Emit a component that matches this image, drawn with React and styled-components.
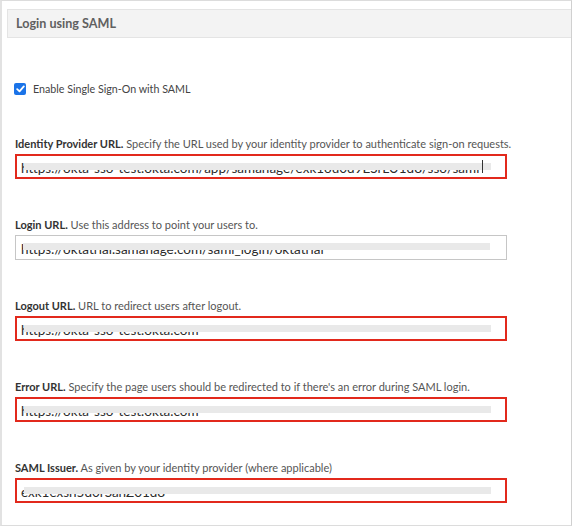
import React from 'react'
import styled, { createGlobalStyle } from 'styled-components'

const Global = createGlobalStyle`
    html, body {
        margin: 0;
        padding: 0;
        background: #ffffff;
    }
    body {
        font-family: Lato, "Open Sans", "Liberation Sans", sans-serif;
    }
`

const fields = [
    {
        title: 'Identity Provider URL.',
        hint: 'Specify the URL used by your identity provider to authenticate sign-on requests.',
        value: 'https://okta-sso-test.okta.com/app/samanage/exk1ou0d9ESrLU1d8/sso/saml',
        flagged: true,
        cursor: true,
    },
    {
        title: 'Login URL.',
        hint: 'Use this address to point your users to.',
        value: 'https://oktatrial.samanage.com/saml_login/oktatrial',
        flagged: false,
    },
    {
        title: 'Logout URL.',
        hint: 'URL to redirect users after logout.',
        value: 'https://okta-sso-test.okta.com',
        flagged: true,
    },
    {
        title: 'Error URL.',
        hint: "Specify the page users should be redirected to if there's an error during SAML login.",
        value: 'https://okta-sso-test.okta.com',
        flagged: true,
    },
    {
        title: 'SAML Issuer.',
        hint: 'As given by your identity provider (where applicable)',
        value: 'exk1exsh5d0rSanZ01d8',
        flagged: true,
    },
]

export default function App() {
    return (
        <>
            <Global />
            <Frame>
                <Header>Login using SAML</Header>
                <CheckRow>
                    <CheckBox>
                        <svg width="9" height="8" viewBox="0 0 9 8">
                            <path d="M1.2 4.2 L3.5 6.3 L7.8 1.4" fill="none" stroke="#fff" strokeWidth="1.8" strokeLinecap="round" strokeLinejoin="round" />
                        </svg>
                    </CheckBox>
                    <CheckLabel>Enable Single Sign-On with SAML</CheckLabel>
                </CheckRow>
                <Fields>
                    {fields.map((f) => (
                        <Field key={f.title}>
                            <Label>
                                <b>{f.title}</b> {f.hint}
                            </Label>
                            <Input flagged={f.flagged}>
                                <Value>{f.value}{f.cursor && <Caret />}</Value>
                                <Redact />
                            </Input>
                        </Field>
                    ))}
                </Fields>
            </Frame>
        </>
    )
}

const Frame = styled.div`
    box-sizing: border-box;
    width: 572px;
    height: 526px;
    border-top: 1px solid #dcdcdc;
    border-left: 2px solid #e2e2e2;
    border-right: 1px solid #d0d0d0;
    border-bottom: 1px solid #dcdcdc;
    padding: 8px 0 0 5px;
    overflow: hidden;
`
const Header = styled.div`
    box-sizing: border-box;
    height: 29px;
    display: flex;
    align-items: center;
    padding-left: 8px;
    background: #f3f3f3;
    border: 1px solid #e4e4e4;
    border-right: none;
    font-size: 12.6px;
    font-weight: 700;
    color: #606060;
`
const CheckRow = styled.div`
    display: flex;
    align-items: center;
    gap: 7px;
    margin: 44px 0 0 7px;
`
const CheckBox = styled.div`
    box-sizing: border-box;
    width: 12px;
    height: 12px;
    border-radius: 2px;
    background: #1a73e8;
    display: flex;
    align-items: center;
    justify-content: center;
`
const CheckLabel = styled.span`
    font-size: 10.7px;
    color: #444;
`
const Fields = styled.div`
    display: flex;
    flex-direction: column;
    gap: 39px;
    margin: 42px 0 0 8px;
`
const Field = styled.div`
    display: flex;
    flex-direction: column;
    gap: 3px;
`
const Label = styled.div`
    font-size: 11px;
    line-height: 14px;
    color: #555;
    white-space: nowrap;
    b {
        font-weight: 700;
        color: #333;
    }
`
const Input = styled.div`
    position: relative;
    box-sizing: border-box;
    width: 492px;
    height: 25px;
    border: ${p => p.flagged ? '2px solid #e2291c' : '1px solid #c6c6c6'};
    display: flex;
    align-items: center;
    padding: 2px 0 0 ${p => p.flagged ? '4px' : '5px'};
    background: #fff;
    overflow: hidden;
`
const Value = styled.span`
    font-size: 13.5px;
    color: #2b2b2b;
    white-space: nowrap;
    display: flex;
    align-items: center;
`
const Caret = styled.span`
    position: relative;
    z-index: 1;
    display: inline-block;
    width: 1px;
    height: 13px;
    background: #333;
    margin-left: 3px;
    margin-top: -3px;
`
const Redact = styled.div`
    position: absolute;
    left: 7px;
    top: 7px;
    width: 467px;
    height: 7px;
    background: #e9e9e9;
`
